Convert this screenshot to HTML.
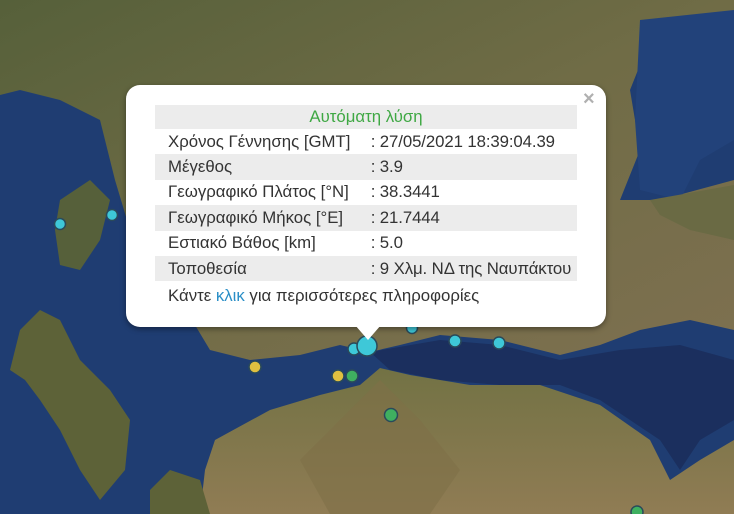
<!DOCTYPE html>
<html><head><meta charset="utf-8"><style>
*{margin:0;padding:0;box-sizing:border-box}
body{width:734px;height:514px;overflow:hidden;position:relative;background:#1e3a6a;font-family:"Liberation Sans",sans-serif}
svg.map{position:absolute;left:0;top:0}
.pop{position:absolute;left:126px;top:85px;width:480px;height:242px;background:#fff;border-radius:14px;box-shadow:0 2px 6px rgba(0,0,0,.4)}
.tip{position:absolute;left:355px;top:325px;width:0;height:0;border-left:13px solid transparent;border-right:13px solid transparent;border-top:15px solid #fff}
.x{position:absolute;left:583px;top:88px;font-size:20px;color:#b0b0b0;font-weight:bold}
table{position:absolute;left:155px;top:105px;width:422px;border-collapse:collapse;font-size:16.8px;color:#333}
td{height:25.4px;padding:0 0 0 13px;white-space:nowrap}
td.v{padding-left:15px;letter-spacing:-.1px}
tr.g td{background:#ececec}
th{height:24px;font-weight:normal;color:#3fa844;background:#ececec;font-size:16.8px}
.foot{position:absolute;left:168px;top:286px;font-size:16.8px;color:#333}
.foot span{color:#2b8fc7}
</style></head><body>
<svg class="map" width="734" height="514" viewBox="0 0 734 514">
<defs>
<linearGradient id="land" x1="0" y1="0" x2="1" y2="1"><stop offset="0" stop-color="#56603a"/><stop offset=".5" stop-color="#706c46"/><stop offset="1" stop-color="#7e7050"/></linearGradient>
<linearGradient id="pel" x1="0" y1="0" x2="0" y2="1"><stop offset="0" stop-color="#727244"/><stop offset="1" stop-color="#907c54"/></linearGradient>
</defs>
<rect width="734" height="514" fill="#1f3d72"/>
<path d="M0 0H734V30L650 40 630 90 640 150 620 200 660 200 734 180V330L690 320 640 330 600 345 560 355 500 340 440 335 400 345 370 352 340 345 300 355 250 360 210 350 180 300 150 260 130 230 115 180 100 120 60 100 20 90 0 95Z" fill="url(#land)"/>
<path d="M640 20 734 10V140L700 160 680 200 640 190 635 120Z" fill="#22427a"/>
<path d="M650 200 734 185V240L690 230 660 215Z" fill="#6a6a44"/>
<path d="M370 352 440 340 500 345 560 360 620 350 680 345 734 360V420L700 440 680 470 660 440 600 400 560 385 500 385 440 380 390 370Z" fill="#1b2f5e"/>
<path d="M200 514 205 470 215 440 270 410 320 395 360 385 380 368 410 375 470 385 540 385 600 405 650 440 670 480 700 460 734 440V514Z" fill="url(#pel)"/>
<path d="M380 380 420 420 460 470 430 514 330 514 300 460 340 420Z" fill="#7e7048" opacity=".6"/>
<path d="M20 330 40 310 60 320 80 360 110 390 130 420 125 470 100 500 80 470 60 430 40 400 25 380 10 370Z" fill="#5d6238"/>
<path d="M60 200 90 180 110 200 100 240 80 270 60 265 55 230Z" fill="#56603a"/>
<path d="M150 490 170 470 200 480 210 514H150Z" fill="#5d6238"/>
<g stroke="#2a4a5a" stroke-width="1.5">
<circle cx="60" cy="224" r="5.5" fill="#3ec8d8"/>
<circle cx="112" cy="215" r="5.5" fill="#3ec8d8"/>
<circle cx="412" cy="328" r="5.5" fill="#3ec8d8"/>
<circle cx="455" cy="341" r="6" fill="#3ec8d8"/>
<circle cx="499" cy="343" r="6" fill="#3ec8d8"/>
<circle cx="354" cy="349" r="6" fill="#3ec8d8"/>
<circle cx="367" cy="346" r="10" fill="#3ec8d8"/>
<circle cx="255" cy="367" r="6" fill="#e0c040"/>
<circle cx="338" cy="376" r="6" fill="#e0c040"/>
<circle cx="352" cy="376" r="6" fill="#3fb060"/>
<circle cx="391" cy="415" r="6.5" fill="#3fb060"/>
<circle cx="637" cy="512" r="6" fill="#3fb060"/>
</g>
</svg>
<div class="pop"></div>
<div class="tip"></div>
<div class="x">×</div>
<table>
<tr><th colspan="2">Αυτόματη λύση</th></tr>
<tr><td>Χρόνος Γέννησης [GMT]</td><td class="v">: 27/05/2021 18:39:04.39</td></tr>
<tr class="g"><td>Μέγεθος</td><td class="v">: 3.9</td></tr>
<tr><td>Γεωγραφικό Πλάτος [°N]</td><td class="v">: 38.3441</td></tr>
<tr class="g"><td>Γεωγραφικό Μήκος [°E]</td><td class="v">: 21.7444</td></tr>
<tr><td>Εστιακό Βάθος [km]</td><td class="v">: 5.0</td></tr>
<tr class="g"><td>Τοποθεσία</td><td class="v">: 9 Χλμ. ΝΔ της Ναυπάκτου</td></tr>
</table>
<div class="foot">Κάντε <span>κλικ</span> για περισσότερες πληροφορίες</div>
</body></html>
